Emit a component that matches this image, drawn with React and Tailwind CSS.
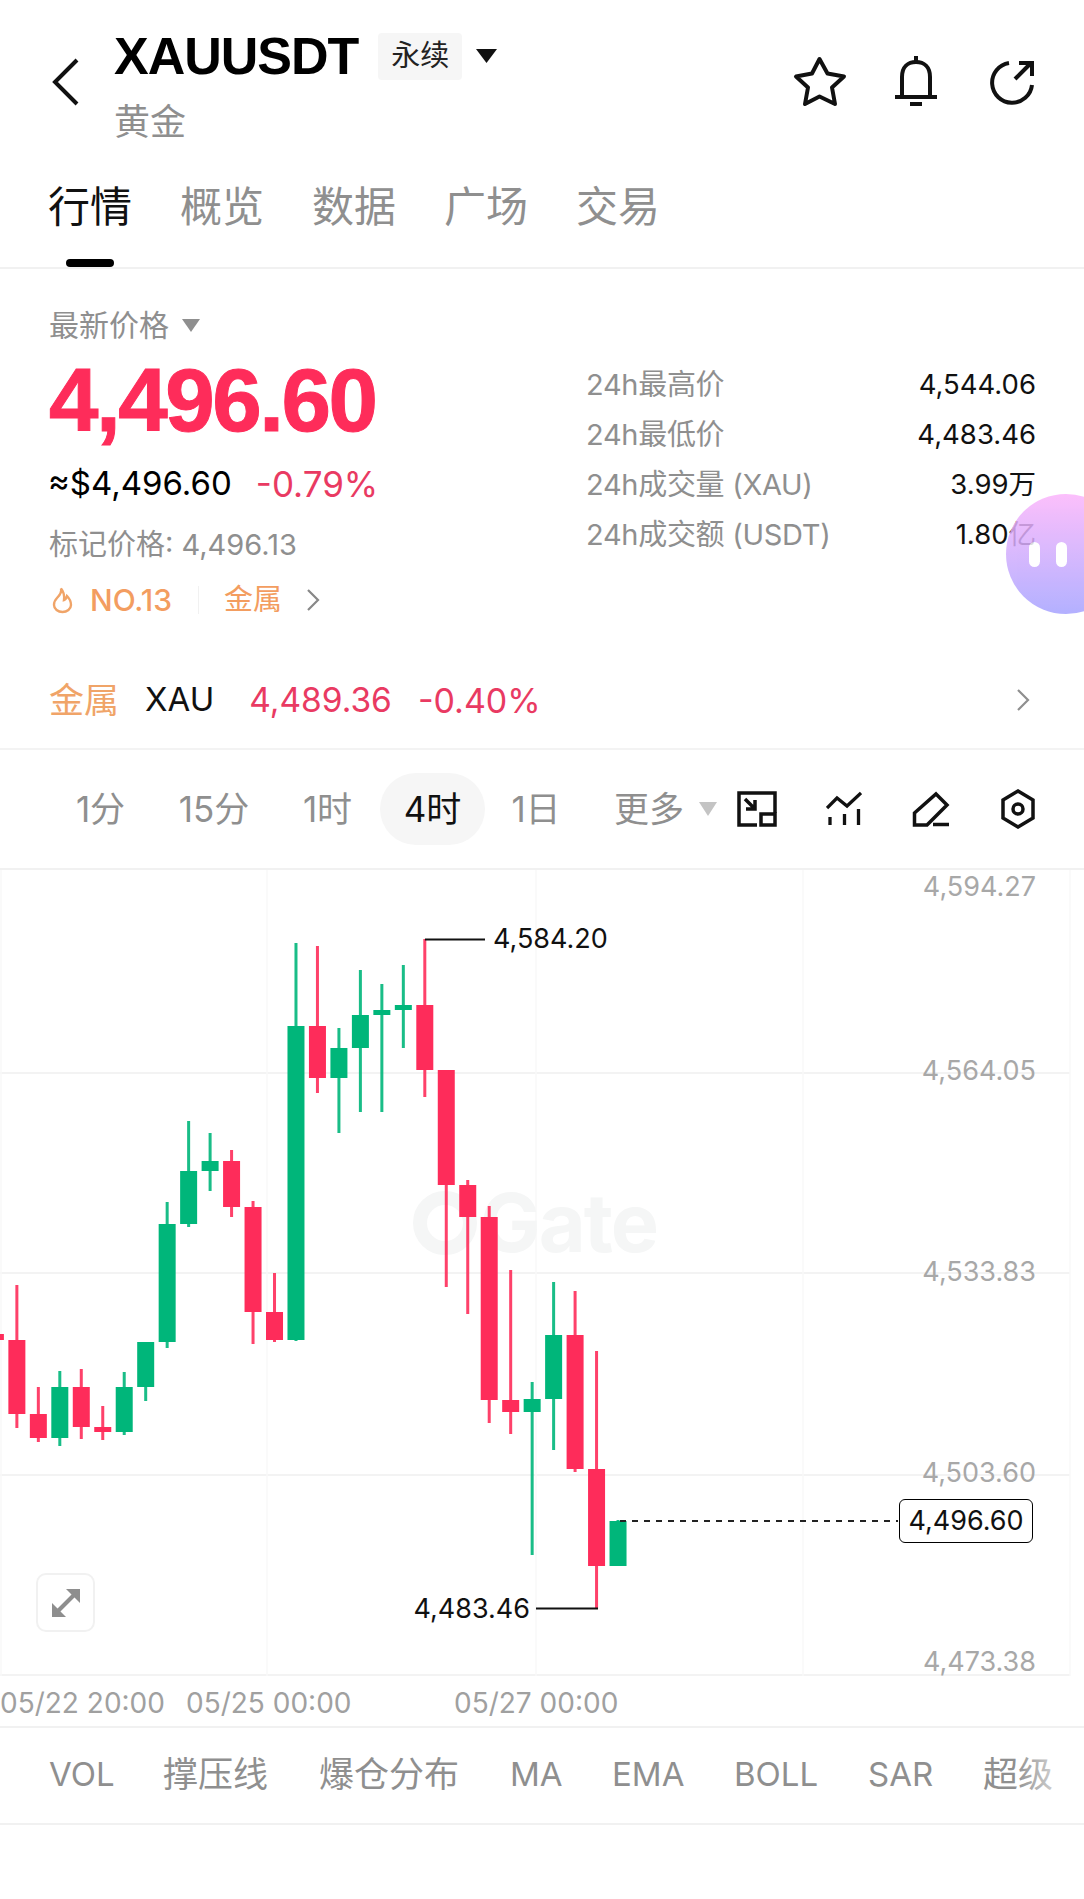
import React from "react";

const UP = "#00b67a";
const DOWN = "#fe2c5a";

// x is derived from the index, the rest is [wickTop, wickBottom, bodyTop, bodyBottom] in page px
const candles = [
    [DOWN, 1320, 1350, 1334, 1340],
    [DOWN, 1285, 1428, 1340, 1414],
    [DOWN, 1387, 1442, 1414, 1438],
    [UP, 1371, 1446, 1387, 1438],
    [DOWN, 1369, 1439, 1387, 1427],
    [DOWN, 1406, 1440, 1427, 1432],
    [UP, 1372, 1435, 1387, 1432],
    [UP, 1342, 1401, 1342, 1387],
    [UP, 1202, 1348, 1224, 1342],
    [UP, 1121, 1227, 1171, 1224],
    [UP, 1133, 1191, 1161, 1171],
    [DOWN, 1150, 1217, 1161, 1207],
    [DOWN, 1201, 1344, 1207, 1312],
    [DOWN, 1273, 1342, 1312, 1340],
    [UP, 943, 1341, 1026, 1340],
    [DOWN, 946, 1093, 1026, 1078],
    [UP, 1028, 1133, 1048, 1078],
    [UP, 970, 1112, 1015, 1048],
    [UP, 984, 1112, 1010, 1015],
    [UP, 965, 1048, 1005, 1010],
    [DOWN, 939, 1097, 1005, 1070],
    [DOWN, 1070, 1287, 1070, 1185],
    [DOWN, 1180, 1314, 1185, 1217],
    [DOWN, 1206, 1423, 1217, 1400],
    [DOWN, 1270, 1434, 1400, 1412],
    [UP, 1382, 1555, 1399, 1412],
    [UP, 1282, 1450, 1335, 1399],
    [DOWN, 1291, 1472, 1335, 1469],
    [DOWN, 1351, 1609, 1469, 1566],
    [UP, 1520, 1566, 1521, 1566],
];

const stats = [
    ["24h最高价", "4,544.06"],
    ["24h最低价", "4,483.46"],
    ["24h成交量 (XAU)", "3.99万"],
    ["24h成交额 (USDT)", "1.80亿"],
];

const tabs = ["行情", "概览", "数据", "广场", "交易"];
const intervals = [
    ["1分", "w-[101px]"],
    ["15分", "w-[126px]"],
    ["1时", "w-[101px]"],
    ["4时", "w-[105px] ml-[2px] bg-[#f6f6f6] text-[#111]"],
    ["1日", "w-[102px]"],
];
const indicators = [
    ["VOL", 49, "text-[33px]"],
    ["撑压线", 163, "text-[35px]"],
    ["爆仓分布", 319, "text-[35px]"],
    ["MA", 510, "text-[33px]"],
    ["EMA", 612, "text-[33px]"],
    ["BOLL", 734, "text-[33px]"],
    ["SAR", 868, "text-[33px]"],
    ["超级", 983, "text-[35px]"],
];
const axis = [
    ["4,594.27", 887],
    ["4,564.05", 1071],
    ["4,533.83", 1272],
    ["4,503.60", 1473],
    ["4,473.38", 1662],
];

function Chevron({ color = "#8f8f8f" }) {
    return (
        <svg width="14" height="24" viewBox="0 0 14 24" fill="none" stroke={color} strokeWidth="2.2">
            <path d="M2 2 L12 12 L2 22" />
        </svg>
    );
}

function Caret({ w, h, color }) {
    return (
        <svg width={w} height={h} viewBox="0 0 20 14" preserveAspectRatio="none" fill={color}>
            <path d="M0 0 H20 L10 14 Z" />
        </svg>
    );
}

function Header() {
    return (
        <div className="relative h-[165px] pl-[114px] pt-[27px]">
            <svg className="absolute left-[52px] top-[58px]" width="30" height="48" viewBox="0 0 30 48" fill="none" stroke="#111" strokeWidth="4">
                <path d="M25 2 L3 24 L25 46" />
            </svg>
            <div className="flex items-center h-[58px]">
                <span className="font-['Liberation_Sans'] text-[52px] leading-[58px] font-bold text-black tracking-[-1px]">XAUUSDT</span>
                <span className="ml-[20px] w-[84px] h-[47px] rounded-[4px] bg-[#f6f6f6] flex items-center justify-center text-[29px] text-[#222]">永续</span>
                <span className="ml-[14px] mb-[1px]"><Caret w={21} h={14} color="#111" /></span>
            </div>
            <div className="mt-[17px] text-[36px] leading-[40px] text-[#8f8f8f]">黄金</div>
            <div className="absolute top-[54px] left-[793px] flex items-start">
                <svg width="54" height="54" viewBox="0 0 54 54" fill="none" stroke="#111" strokeWidth="4" strokeLinejoin="round">
                    <path d="M26.5 5 L34.5 19.5 L51 22.5 L39 33.5 L42 50 L26.5 42.5 L12 50 L15 33.5 L3 22.5 L19 19.5 Z" />
                </svg>
                <svg className="ml-[47px]" width="44" height="54" viewBox="0 0 44 54" fill="none" stroke="#111" strokeWidth="4">
                    <path d="M22 2 V8" />
                    <path d="M8 43 V23 C8 13 14 8 22 8 C30 8 36 13 36 23 V43" />
                    <path d="M1 43 H43" />
                    <path d="M16 50 H28" />
                </svg>
                <svg className="ml-[50px]" width="48" height="54" viewBox="0 0 48 54" fill="none" stroke="#111" strokeWidth="4">
                    <path d="M21 9 A20 20 0 1 0 44 31" />
                    <path d="M27 25 L43 9" />
                    <path d="M31 9 H44 V22" />
                </svg>
            </div>
        </div>
    );
}

function Tabs() {
    return (
        <div className="relative h-[104px] pl-[48px] border-b-[2px] border-[#f1f1f1]">
            <div className="flex gap-[48px] pt-[17px]">
                {tabs.map((tab, index) => (
                    <span key={tab} className={`text-[42px] leading-[50px] ${index === 0 ? "text-[#111]" : "text-[#8f8f8f]"}`}>{tab}</span>
                ))}
            </div>
            <div className="absolute left-[66px] bottom-0 w-[48px] h-[8px] rounded-full bg-black"></div>
        </div>
    );
}

function PriceBlock() {
    return (
        <div className="flex h-[389px] pl-[49px]">
            <div className="w-[537px] shrink-0">
                <div className="mt-[38px] h-[36px] flex items-center text-[30px] text-[#8f8f8f]">
                    最新价格
                    <span className="ml-[13px]"><Caret w={18} h={13} color="#8f8f8f" /></span>
                </div>
                <div className="mt-[12px] h-[90px] font-['Liberation_Sans'] text-[89px] leading-[90px] font-bold tracking-[-2.5px] [-webkit-text-stroke:1px_#fe2c5a]" style={{ color: DOWN }}>4,496.60</div>
                <div className="mt-[19px] h-[40px] flex items-center">
                    <span className="-ml-[1px] text-[33px] text-black">≈$4,496.60</span>
                    <span className="ml-[24px] text-[35px] text-[#e93a62]">-0.79%</span>
                </div>
                <div className="mt-[23px] h-[36px] flex items-center text-[29px] text-[#8f8f8f]">标记价格: 4,496.13</div>
                <div className="mt-[19px] h-[36px] flex items-center text-[30px] text-[#f39d60]">
                    <svg className="ml-[3px]" width="21" height="27" viewBox="0 0 21 27" fill="none" stroke="#f0a468" strokeWidth="2.4">
                        <path d="M9 1.5 C10 5 8 8 5 11 C3 13 2 15 2 18 C2 22 6 25 10.5 25 C15 25 19 22 19 18 C19 14.5 17 11 15 9 C14.5 11 13.5 12.5 12 13 C12.5 9 12 5 9 1.5 Z" />
                    </svg>
                    <span className="ml-[17px] font-medium">NO.13</span>
                    <span className="ml-[26px] w-[1px] h-[28px] bg-[#f1f1f1]"></span>
                    <span className="ml-[25px] text-[29px]">金属</span>
                    <span className="ml-[24px]"><Chevron color="#888888" /></span>
                </div>
            </div>
            <div className="mt-[91px] w-[450px] shrink-0">
                {stats.map(([label, value]) => (
                    <div key={label} className="h-[50px] flex items-center justify-between">
                        <span className="text-[29px] tracking-[-0.3px] text-[#8f8f8f]">{label}</span>
                        <span className="text-[27.5px] text-[#111]">{value}</span>
                    </div>
                ))}
            </div>
        </div>
    );
}

function SectorRow() {
    return (
        <div className="h-[92px] pb-[6px] pl-[49px] pr-[54px] flex items-center border-b-[2px] border-[#f3f3f3]">
            <span className="text-[35px] text-[#f0a468]">金属</span>
            <span className="ml-[26px] text-[33px] text-[#111]">XAU</span>
            <span className="ml-[35px] text-[33.5px] text-[#e93a62]">4,489.36</span>
            <span className="ml-[26px] text-[34px] text-[#e93a62]">-0.40%</span>
            <span className="ml-auto"><Chevron /></span>
        </div>
    );
}

function IntervalRow() {
    return (
        <div className="h-[120px] pl-[50px] flex items-center border-b-[2px] border-[#f1f1f1] text-[35px] text-[#8f8f8f]">
            {intervals.map(([item, cls]) => (
                <span key={item} className={`h-[72px] flex items-center justify-center rounded-full ${cls}`}>{item}</span>
            ))}
            <span className="ml-[27px]">更多</span>
            <span className="ml-[15px]"><Caret w={18} h={14} color="#c4c4c4" /></span>
            <div className="absolute left-[737px] flex items-center">
                <svg width="40" height="36" viewBox="0 0 40 36" fill="none" stroke="#111" strokeWidth="3.5">
                    <path d="M38 22 V2 H2 V34 H20" />
                    <rect x="24" y="23" width="14" height="11" />
                    <path d="M8 8 L18 18 M18 9 V18 H9" />
                </svg>
                <svg className="ml-[49px]" width="36" height="36" viewBox="0 0 36 36" fill="none" stroke="#111" strokeWidth="3.3">
                    <path d="M1 17 L11 7 L21 15 L35 2" />
                    <path d="M4 26 V34 M18.5 23 V34 M32.5 18 V34" />
                </svg>
                <svg className="ml-[50px]" width="38" height="36" viewBox="0 0 38 36" fill="none" stroke="#111" strokeWidth="3.5">
                    <path d="M24 3 L35 14 L15 34 H2.5 V22 Z" />
                    <path d="M21 33.5 H37" />
                </svg>
                <svg className="ml-[50px]" width="36" height="40" viewBox="0 0 36 40" fill="none" stroke="#111" strokeWidth="3.5">
                    <path d="M18 2 L33 11 V29 L18 38 L3 29 V11 Z" />
                    <circle cx="18" cy="20" r="5" />
                </svg>
            </div>
        </div>
    );
}

function Chart() {
    return (
        <div className="relative h-[806px]">
            <svg className="absolute inset-0" width="1084" height="806" viewBox="0 870 1084 806" fill="none">
                {[1073, 1273, 1475, 1675].map((y) => (
                    <line key={y} x1="0" x2="1070" y1={y} y2={y} stroke="#f3f3f3" strokeWidth="2" />
                ))}
                {[1, 267, 536, 803, 1070].map((x) => (
                    <line key={x} x1={x} x2={x} y1="870" y2="1676" stroke="#f8f8f8" strokeWidth="1.5" />
                ))}
                <circle cx="445" cy="1223" r="25" stroke="#f5f6f6" strokeWidth="14" />
            </svg>
            <span className="absolute left-[480px] top-[309px] text-[81px] leading-[88px] font-bold text-[#f5f6f6] tracking-[-2px]">Gate</span>
            <svg className="absolute inset-0" width="1084" height="806" viewBox="0 870 1084 806" fill="none">
                {candles.map(([color, wickTop, wickBottom, bodyTop, bodyBottom], index) => {
                    const x = -4.6 + index * 21.47;
                    return (
                        <g key={index}>
                            <rect x={x - 1.5} y={wickTop} width="3" height={wickBottom - wickTop} fill={color} opacity="0.9" />
                            <rect x={x - 8.5} y={bodyTop} width="17" height={bodyBottom - bodyTop} fill={color} />
                        </g>
                    );
                })}
                <line x1="425" x2="485" y1="939.5" y2="939.5" stroke="#111" strokeWidth="2" />
                <line x1="536" x2="598" y1="1608.5" y2="1608.5" stroke="#111" strokeWidth="2" />
                <line x1="620" x2="898" y1="1521" y2="1521" stroke="#222" strokeWidth="2" strokeDasharray="6 6" />
            </svg>
            {axis.map(([price, y]) => (
                <span key={price} className="absolute right-[48px] text-[27px] leading-[36px] text-[#a8a8a8]" style={{ top: y - 870 - 18 }}>{price}</span>
            ))}
            <span className="absolute left-[493px] top-[51px] text-[27px] leading-[36px] text-[#111]">4,584.20</span>
            <span className="absolute right-[554px] top-[721px] text-[27px] leading-[36px] text-[#111]">4,483.46</span>
            <span className="absolute left-[899px] top-[629px] w-[134px] h-[44px] bg-white border-[1.5px] border-black rounded-[6px] flex items-center justify-center text-[27px] text-[#111]">4,496.60</span>
            <div className="absolute left-[36px] top-[703px] w-[59px] h-[59px] rounded-[10px] bg-white border-[2px] border-[#f1f1f1] flex items-center justify-center">
                <svg width="28" height="28" viewBox="0 0 28 28" fill="#8e8e8e" stroke="none">
                    <path d="M14 0 H28 V14 Z" />
                    <path d="M0 14 V28 H14 Z" />
                    <path d="M6 22 L22 6" stroke="#8e8e8e" strokeWidth="4" />
                </svg>
            </div>
        </div>
    );
}

function DateRow() {
    return (
        <div className="h-[52px] pt-[3px] flex items-center border-b-[2px] border-[#f1f1f1] text-[28px] text-[#a0a0a0] whitespace-nowrap">
            <span>05/22 20:00</span>
            <span className="absolute left-[186px]">05/25 00:00</span>
            <span className="absolute left-[454px]">05/27 00:00</span>
        </div>
    );
}

function IndicatorRow() {
    return (
        <div className="relative h-[97px] overflow-hidden border-b-[2px] border-[#f1f1f1] text-[#8f8f8f]">
            {indicators.map(([name, left, size]) => (
                <span key={name} className={`absolute top-[23px] leading-[46px] ${size}`} style={{ left }}>{name}</span>
            ))}
            <div className="absolute right-0 top-0 h-full w-[70px] bg-gradient-to-r from-transparent to-white"></div>
        </div>
    );
}

export default function App() {
    return (
        <div className="relative w-[1084px] h-[1899px] overflow-hidden bg-white font-['Inter','Noto_Sans_CJK_SC',sans-serif]">
            <Header />
            <Tabs />
            <PriceBlock />
            <SectorRow />
            <IntervalRow />
            <Chart />
            <DateRow />
            <IndicatorRow />
            <div className="absolute left-[1006px] top-[494px] w-[120px] h-[120px] rounded-full bg-gradient-to-b from-[#fbb4fb] to-[#a6a3ff] opacity-85 flex items-center pl-[23px] gap-[16px]">
                <span className="w-[11px] h-[25px] rounded-full bg-white"></span>
                <span className="w-[11px] h-[25px] rounded-full bg-white"></span>
            </div>
        </div>
    );
}
